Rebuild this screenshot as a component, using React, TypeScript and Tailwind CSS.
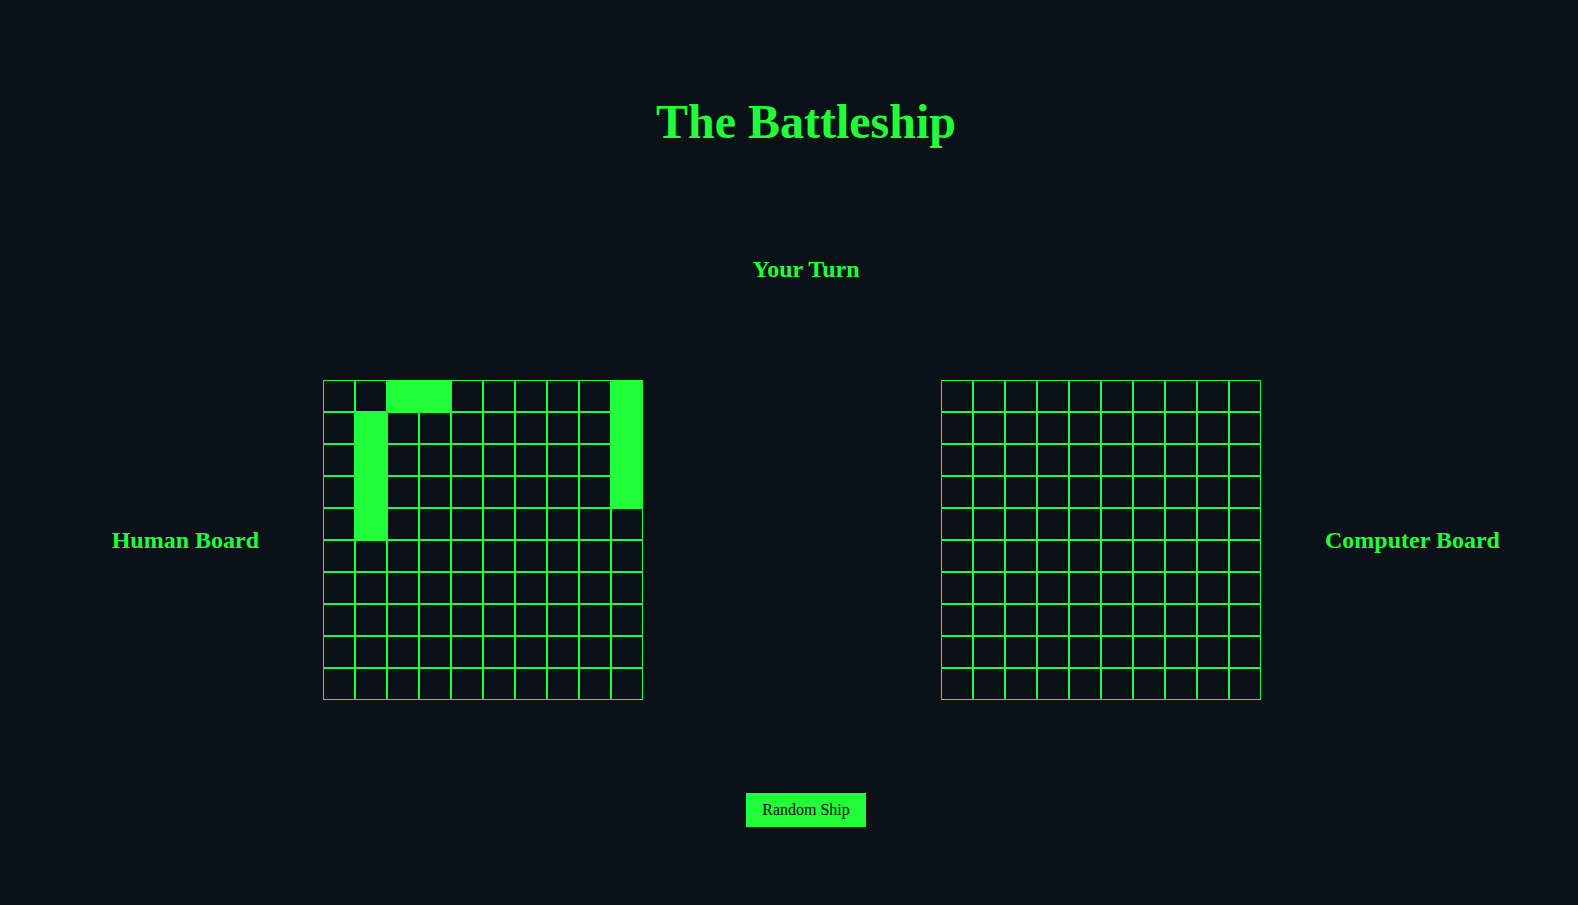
const SIZE = 10

// human ships as "row-col" keys
const humanShips = new Set([
  "0-2", "0-3",
  "1-1", "2-1", "3-1", "4-1",
  "0-9", "1-9", "2-9", "3-9",
])

function Board({ ships }: { ships?: Set<string> }) {
  const cells = []
  for (let r = 0; r < SIZE; r++) {
    for (let c = 0; c < SIZE; c++) {
      const filled = ships?.has(`${r}-${c}`)
      cells.push(
        <div
          key={`${r}-${c}`}
          className={`w-8 h-8 border border-[#22ff3a] ${filled ? "bg-[#22ff3a]" : "bg-transparent"}`}
        />
      )
    }
  }
  return <div className="grid grid-cols-[repeat(10,32px)] shrink-0">{cells}</div>
}

export default function App() {
  return (
    <div
      className="min-h-[905px] w-full bg-[#0a1217] text-[#22ff3a]"
      style={{ fontFamily: '"Liberation Serif", "Times New Roman", serif' }}
    >
      <div className="flex flex-col items-center pl-[34px] pt-[94px]">
        <h1 className="text-[48px] leading-[56px] font-bold">The Battleship</h1>
        <h3 className="mt-[105px] text-[24px] leading-[28px] font-bold">Your Turn</h3>
      </div>

      <div className="mt-[97px] flex items-center">
        <div className="w-[323px] pr-[64px] text-right text-[24px] leading-[28px] font-bold">
          Human Board
        </div>
        <Board ships={humanShips} />
        <div className="w-[298px] shrink-0" />
        <Board />
        <div className="pl-[64px] text-[24px] leading-[28px] font-bold">Computer Board</div>
      </div>

      <div className="flex justify-center pl-[34px] pt-[93px]">
        <button className="bg-[#22ff3a] text-black text-[16px] leading-[18px] px-[16px] py-[8px]">
          Random Ship
        </button>
      </div>
    </div>
  )
}
